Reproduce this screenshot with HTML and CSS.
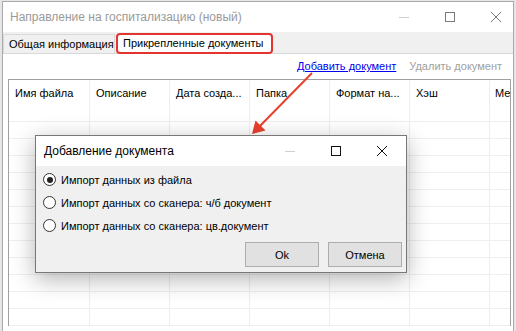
FILE: index.html
```html
<!DOCTYPE html>
<html lang="ru">
<head>
<meta charset="UTF-8">
<title>Направление на госпитализацию</title>
<link rel="stylesheet" href="styles.css">
</head>
<body>

<div class="window">
    <div class="titlebar">
        <span class="title">Направление на госпитализацию (новый)</span>
        <div class="controls main-ctl">
            <svg class="ctl" width="46" height="30" viewBox="0 0 46 30"><line x1="18" y1="15.5" x2="28" y2="15.5" stroke="#d0d0d0" stroke-width="1"/></svg>
            <svg class="ctl" width="46" height="30" viewBox="0 0 46 30"><rect x="18.5" y="10.5" width="9" height="9" fill="none" stroke="#7a7a7a" stroke-width="1"/></svg>
            <svg class="ctl" width="46" height="30" viewBox="0 0 46 30"><path d="M18 10 L28 20 M28 10 L18 20" stroke="#7a7a7a" stroke-width="1"/></svg>
        </div>
    </div>

    <div class="tabs">
        <div class="tab">Общая информация</div>
        <div class="tab active">Прикрепленные документы</div>
    </div>

    <div class="panel">
        <div class="toolbar">
            <a class="link" href="#">Добавить документ</a>
            <span class="disabled">Удалить документ</span>
        </div>
        <div class="grid">
            <div class="row head">
                <div class="cell first">Имя файла</div>
                <div class="cell">Описание</div>
                <div class="cell">Дата созда...</div>
                <div class="cell">Папка</div>
                <div class="cell">Формат на...</div>
                <div class="cell">Хэш</div>
                <div class="cell last">Ме</div>
            </div>
            <div class="row"><div class="cell first"></div><div class="cell"></div><div class="cell"></div><div class="cell"></div><div class="cell"></div><div class="cell"></div><div class="cell last"></div></div>
            <div class="row"><div class="cell first"></div><div class="cell"></div><div class="cell"></div><div class="cell"></div><div class="cell"></div><div class="cell"></div><div class="cell last"></div></div>
            <div class="row"><div class="cell first"></div><div class="cell"></div><div class="cell"></div><div class="cell"></div><div class="cell"></div><div class="cell"></div><div class="cell last"></div></div>
            <div class="row"><div class="cell first"></div><div class="cell"></div><div class="cell"></div><div class="cell"></div><div class="cell"></div><div class="cell"></div><div class="cell last"></div></div>
            <div class="row"><div class="cell first"></div><div class="cell"></div><div class="cell"></div><div class="cell"></div><div class="cell"></div><div class="cell"></div><div class="cell last"></div></div>
            <div class="row"><div class="cell first"></div><div class="cell"></div><div class="cell"></div><div class="cell"></div><div class="cell"></div><div class="cell"></div><div class="cell last"></div></div>
            <div class="row"><div class="cell first"></div><div class="cell"></div><div class="cell"></div><div class="cell"></div><div class="cell"></div><div class="cell"></div><div class="cell last"></div></div>
            <div class="row"><div class="cell first"></div><div class="cell"></div><div class="cell"></div><div class="cell"></div><div class="cell"></div><div class="cell"></div><div class="cell last"></div></div>
            <div class="row"><div class="cell first"></div><div class="cell"></div><div class="cell"></div><div class="cell"></div><div class="cell"></div><div class="cell"></div><div class="cell last"></div></div>
            <div class="row"><div class="cell first"></div><div class="cell"></div><div class="cell"></div><div class="cell"></div><div class="cell"></div><div class="cell"></div><div class="cell last"></div></div>
            <div class="row"><div class="cell first"></div><div class="cell"></div><div class="cell"></div><div class="cell"></div><div class="cell"></div><div class="cell"></div><div class="cell last"></div></div>
            <div class="row"><div class="cell first"></div><div class="cell"></div><div class="cell"></div><div class="cell"></div><div class="cell"></div><div class="cell"></div><div class="cell last"></div></div>
        </div>
    </div>

    <!-- annotation arrow -->
    <svg class="arrow" width="516" height="331" viewBox="0 0 516 331">
        <line x1="312" y1="73" x2="257" y2="129" stroke="#e8402e" stroke-width="2"/>
        <path d="M252 134 L255.5 120.5 L265.5 130.5 Z" fill="#e8402e"/>
    </svg>

    <div class="dialog">
        <div class="titlebar dlg-title">
            <span class="title dark">Добавление документа</span>
            <div class="controls">
                <svg class="ctl" width="46" height="30" viewBox="0 0 46 30"><line x1="18" y1="15.5" x2="28" y2="15.5" stroke="#d0d0d0" stroke-width="1"/></svg>
                <svg class="ctl" width="46" height="30" viewBox="0 0 46 30"><rect x="18.5" y="10.5" width="9" height="9" fill="none" stroke="#111" stroke-width="1"/></svg>
                <svg class="ctl" width="46" height="30" viewBox="0 0 46 30"><path d="M18 10 L28 20 M28 10 L18 20" stroke="#111" stroke-width="1"/></svg>
            </div>
        </div>
        <div class="dlg-body">
            <label class="radio"><span class="dot checked"></span>Импорт данных из файла</label>
            <label class="radio"><span class="dot"></span>Импорт данных со сканера: ч/б документ</label>
            <label class="radio"><span class="dot"></span>Импорт данных со сканера: цв.документ</label>
            <div class="buttons">
                <button class="button">Ok</button>
                <button class="button">Отмена</button>
            </div>
        </div>
    </div>
</div>

</body>
</html>
```

FILE: styles.css
```css
body {
    margin: 0;
    background-color: #e6e6e6;
    font-family: 'Liberation Sans', Arial, sans-serif;
    font-size: 11px;
    color: #000;
}

.window {
    position: relative;
    margin-left: 2px;
    margin-top: 1px;
    width: 512px;
    height: 330px;
    box-sizing: border-box;
    background-color: #f0f0f0;
    border: 1px solid #aaaaaa;
    border-bottom: none;
    overflow: hidden;
}

.titlebar {
    display: flex;
    align-items: center;
    height: 30px;
    background-color: #fff;
}

.title {
    flex: 1;
    padding-left: 7px;
    color: #9a9a9a;
    font-size: 12px;
}

.title.dark {
    color: #000;
}

.controls {
    display: flex;
}

.main-ctl {
    margin-right: -6px;
}

.ctl {
    display: block;
}

.tabs {
    display: flex;
    align-items: flex-end;
    height: 21px;
}

.tab {
    width: 112px;
    box-sizing: border-box;
    height: 19px;
    line-height: 18px;
    padding: 0 5px;
    border: 1px solid #d9d9d9;
    border-bottom: none;
    background-color: #f0f0f0;
    white-space: nowrap;
}

.tab.active {
    width: 157px;
    height: 21px;
    line-height: 17px;
    margin-left: 1px;
    padding: 0 5px;
    background-color: #fff;
    border: 2px solid #e3342f;
    border-radius: 4px;
    margin-bottom: -1px;
    position: relative;
}

.panel {
    background-color: #fff;
    border-top: 1px solid #d9d9d9;
    height: 300px;
    padding: 0 2px 0 5px;
}

.toolbar {
    display: flex;
    justify-content: flex-end;
    gap: 13px;
    height: 25px;
    line-height: 24px;
    padding-right: 9px;
}

.link {
    color: #0000ee;
    text-decoration: underline;
}

.disabled {
    color: #a0a0a0;
}

.grid {
    border-top: 1px solid #a0a0a0;
    border-left: 1px solid #a0a0a0;
    border-right: 1px solid #a0a0a0;
}

.row {
    display: flex;
    height: 17px;
    border-bottom: 1px solid #efefef;
    box-sizing: border-box;
}

.row.head {
    height: 42px;
}

.cell {
    width: 80px;
    flex-shrink: 0;
    box-sizing: border-box;
    border-right: 1px solid #eeeeee;
    padding: 7px 0 0 6px;
    white-space: nowrap;
    overflow: hidden;
}

.cell.first {
    width: 81px;
}

.cell.last {
    flex: 1;
    border-right: none;
    padding-left: 5px;
}

.arrow {
    position: absolute;
    left: -3px;
    top: -2px;
    pointer-events: none;
}

.dialog {
    position: absolute;
    left: 32px;
    top: 133px;
    width: 372px;
    height: 138px;
    box-sizing: border-box;
    border: 1px solid #777;
    background-color: #f0f0f0;
    box-shadow: 0 6px 22px rgba(0, 0, 0, 0.3);
}

.dlg-title .title {
    padding-left: 8px;
}

.dlg-title .controls {
    margin-right: 1px;
}

.dlg-body {
    display: flex;
    flex-direction: column;
    padding: 2px 4px 0 7px;
}

.radio {
    display: flex;
    align-items: center;
    height: 23px;
    gap: 5px;
}

.dot {
    width: 11px;
    height: 11px;
    border: 1px solid #333;
    border-radius: 50%;
    background-color: #fff;
    position: relative;
}

.dot.checked::after {
    content: '';
    position: absolute;
    left: 2.5px;
    top: 2.5px;
    width: 6px;
    height: 6px;
    border-radius: 50%;
    background-color: #222;
}

.buttons {
    display: flex;
    justify-content: flex-end;
    gap: 9px;
    margin-top: 5px;
}

.button {
    width: 74px;
    height: 25px;
    font-family: 'Liberation Sans', Arial, sans-serif;
    font-size: 11px;
    background-color: #e1e1e1;
    border: 1px solid #adadad;
    color: #000;
}
```
